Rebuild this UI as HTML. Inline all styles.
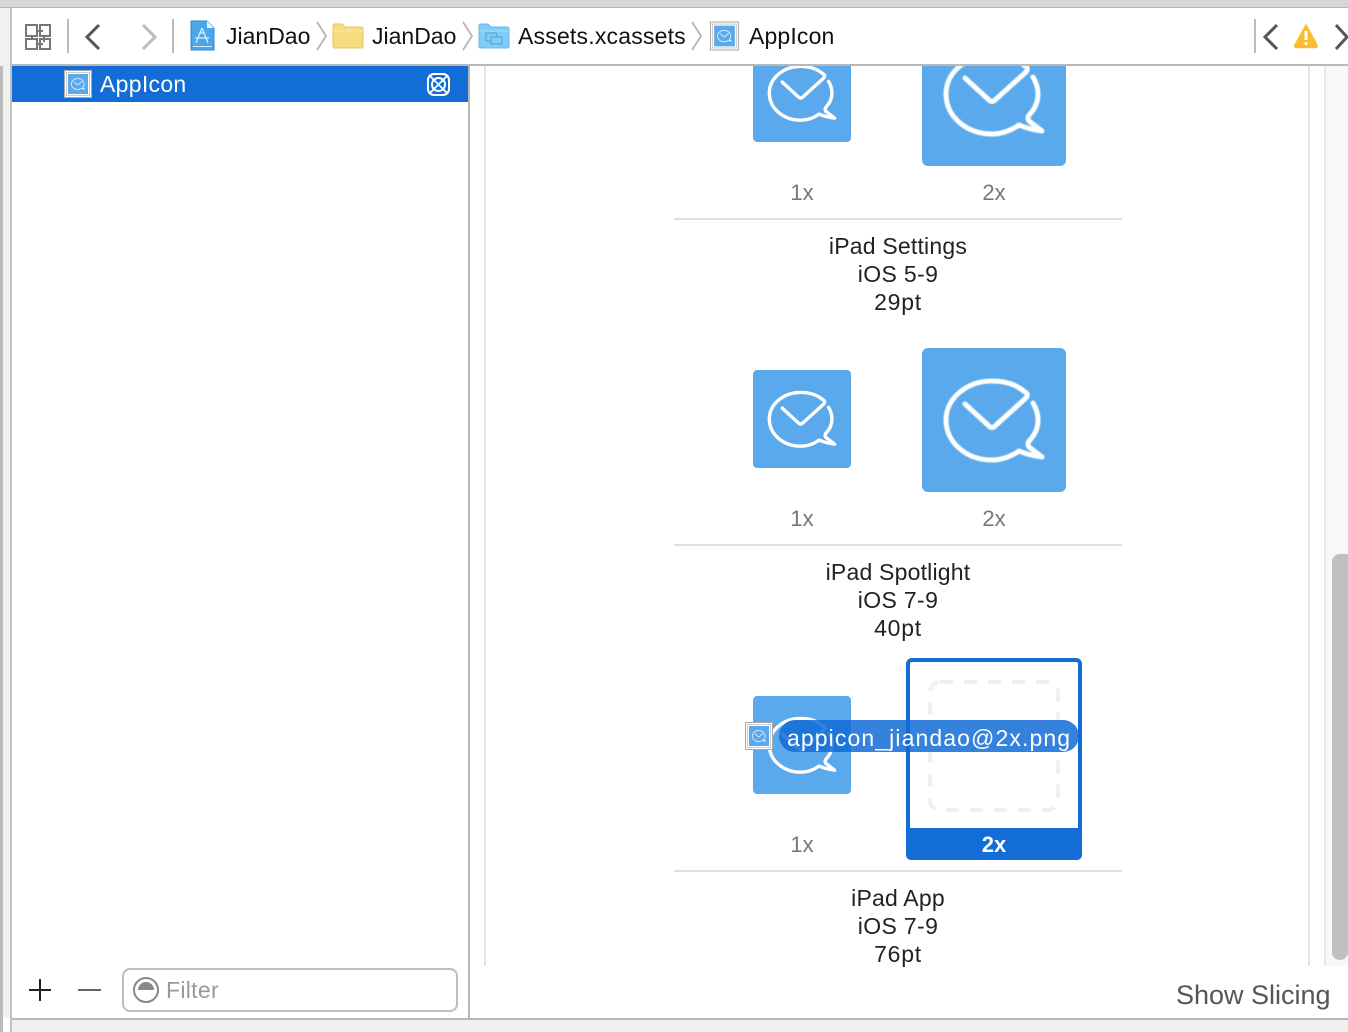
<!DOCTYPE html>
<html><head><meta charset="utf-8">
<style>
html,body{margin:0;padding:0;background:#fff}
#p{position:relative;width:1348px;height:1032px;overflow:hidden;background:#fff;font-family:"Liberation Sans",sans-serif;color:#111}
.a{position:absolute}
.t{position:absolute;font-size:23px;line-height:28px;white-space:nowrap}
.c{position:absolute;width:448px;left:674px;text-align:center;font-size:23px;line-height:28px;color:#222;letter-spacing:.2px}
.c i{font-style:normal;letter-spacing:.35px}
.c b{font-weight:normal;letter-spacing:.75px}
.s{position:absolute;font-size:22px;line-height:28px;color:#777;width:100px;text-align:center}
.d{position:absolute;left:674px;width:448px;height:2px;background:#e0e0e0}
svg{position:absolute;overflow:visible}
</style></head><body><div id="p">
<svg width="0" height="0" style="position:absolute"><defs>
<path id="bb" d="M43 56L67 78Q70 81 73 78L104 50Q107 46 103 44C95 37 84 33 70 33C45 33 24 50 24 72C24 95 45 112 70 112C80 112 90 108 97 103C104 106 112 108 120 109L107 99Q105 96 107 93C113 87 116 80 116 72C116 66 114 60 111 55" fill="none" stroke="#fff" stroke-linecap="round" stroke-linejoin="round"/>
<symbol id="ic" viewBox="0 0 144 144"><rect width="144" height="144" rx="6" fill="#5aa9ec"/><use href="#bb" stroke-width="5" style="filter:blur(.5px)"/></symbol>
<symbol id="th" viewBox="0 0 28 28"><rect x=".5" y=".5" width="27" height="27" fill="#fff" stroke="#aaa" stroke-width="1"/><rect x="2.500" y="2.500" width="23" height="23" fill="#fff" stroke="#ccc" stroke-width="1"/><rect x="4" y="4" width="20" height="20" fill="#5aa9ec"/><use href="#bb" transform="translate(4 4) scale(.139)" stroke-width="6" opacity=".8"/></symbol>
</defs></svg>

<!-- window chrome -->
<div class="a" style="left:0;top:0;width:1348px;height:7px;background:#d6d6d6"></div>
<div class="a" style="left:0;top:7px;width:1348px;height:1px;background:#b5b5b5"></div>
<div class="a" style="left:0;top:8px;width:11px;height:1010px;background:#f1f1ef"></div>
<div class="a" style="left:0;top:66px;width:3px;height:966px;background:#bbb"></div>
<div class="a" style="left:10px;top:8px;width:2px;height:1024px;background:#c2c2c2"></div>
<div class="a" style="left:12px;top:64px;width:1336px;height:2px;background:#b8b8b8"></div>
<div class="a" style="left:12px;top:1018px;width:1336px;height:2px;background:#b8b8b8"></div>
<div class="a" style="left:12px;top:1020px;width:1336px;height:12px;background:#f0f0f0"></div>

<!-- toolbar -->
<svg style="left:0;top:0" width="1348" height="64" fill="none">
<g stroke="#777" stroke-width="2"><rect x="26" y="25" width="11" height="11"/><rect x="40" y="25" width="10" height="11"/><rect x="26" y="39" width="11" height="10"/><rect x="40" y="39" width="10" height="10"/><path d="M37 31h6M37 44h6M44 36v6M32 36v3"/></g>
<path d="M68 19v34M173 19v34M1255 19v34" stroke="#bbb" stroke-width="2"/>
<path d="M99 25L87 37L99 49" stroke="#555" stroke-width="3"/>
<path d="M143 25L155 37L143 49" stroke="#bbb" stroke-width="3"/>
<path d="M317 22L326 36L317 50M463 22L472 36L463 50M692 22L701 36L692 50" stroke="#b5b5b5" stroke-width="1.800"/>
<!-- app doc -->
<path d="M191 21H207L214 28V50H191Z" fill="#4da6ea" stroke="#2f86d0"/>
<path d="M207 21L214 28H207Z" fill="#e9f4fc"/>
<path d="M193 46.500H212" stroke="#d6ecfb" stroke-width="1"/>
<path d="M202 28L196 43M202 28L208 43M195 38H209M199 33H205" stroke="#d6ecfb" stroke-width="1.300"/>
<!-- folder -->
<path d="M333 26Q333 24 335 24H342L345 27H361Q363 27 363 29V47Q363 48 361 48H335Q333 48 333 46Z" fill="#f6dc7e" stroke="#e3c663"/>
<path d="M333 31H363" stroke="#fbeaa6"/>
<!-- blue folder -->
<path d="M479 26Q479 24 481 24H488L491 27H507Q509 27 509 29V47Q509 48 507 48H481Q479 48 479 46Z" fill="#80cdf8" stroke="#6ab8e6"/>
<path d="M479 31H509" stroke="#a5ddfb"/>
<rect x="486" y="33" width="11" height="8" stroke="#4f9fd8" stroke-width="1"/><rect x="491" y="37" width="11" height="7" fill="#80cdf8" stroke="#4f9fd8" stroke-width="1"/>
<path d="M1277 25L1265 37L1277 49" stroke="#555" stroke-width="3"/>
<path d="M1336 25L1347 37L1336 49" stroke="#555" stroke-width="3"/>
<path d="M1306 25L1317 45Q1318 47.500 1315 47.500H1297Q1294 47.500 1295 45Z" fill="#fdbc2c" stroke="#fdbc2c" stroke-width="1.500" stroke-linejoin="round"/>
<path d="M1306 31V40" stroke="#fff" stroke-width="3"/><circle cx="1306" cy="43.500" r="1.500" fill="#fff"/>
</svg>
<svg style="left:710px;top:21px" width="29" height="30"><use href="#th" width="29" height="30"/></svg>
<div class="t" style="left:226px;top:22px">JianDao</div>
<div class="t" style="left:372px;top:22px">JianDao</div>
<div class="t" style="left:518px;top:22px;letter-spacing:.2px">Assets.xcassets</div>
<div class="t" style="left:749px;top:22px;letter-spacing:.15px">AppIcon</div>

<!-- sidebar -->
<div class="a" style="left:468px;top:66px;width:2px;height:952px;background:#b5b5b5"></div>
<div class="a" style="left:12px;top:66px;width:456px;height:36px;background:#126dd6"></div>
<svg style="left:64px;top:70px" width="28" height="28"><use href="#th" width="28" height="28"/></svg>
<div class="t" style="left:100px;top:70px;color:#fff;letter-spacing:.3px">AppIcon</div>
<svg style="left:427px;top:73px" width="23" height="23" fill="none" stroke="#fff" stroke-width="2"><rect x="1" y="1" width="21" height="21" rx="6"/><circle cx="11.500" cy="11.500" r="6.500"/><path d="M3 3L20 20M20 3L3 20" stroke-width="1.700"/></svg>
<svg style="left:20px;top:975px" width="100" height="30" fill="none"><path d="M20 4V26M9 15H31" stroke="#222" stroke-width="2"/><path d="M58 15H81" stroke="#666" stroke-width="2"/></svg>
<div class="a" style="left:122px;top:968px;width:332px;height:40px;border:2px solid #bdbdbd;border-radius:8px"></div>
<svg style="left:132px;top:976px" width="28" height="28" fill="none"><circle cx="14" cy="14" r="12" stroke="#888" stroke-width="2"/><path d="M6 14A8 8 0 0 1 22 14Z" fill="#888"/></svg>
<div class="t" style="left:166px;top:976px;color:#999;letter-spacing:.3px">Filter</div>

<!-- content -->
<div class="a" style="left:484px;top:66px;width:2px;height:900px;background:#e2e2e2"></div>
<div class="a" style="left:1308px;top:66px;width:2px;height:900px;background:#e2e2e2"></div>
<div class="a" style="left:1324px;top:66px;width:24px;height:900px;background:#f8f8f8;border-left:2px solid #e8e8e8;box-sizing:border-box"></div>
<div class="a" style="left:1332px;top:554px;width:16px;height:406px;background:#c0c0c0;border-radius:8px 0 8px 8px"></div>

<!-- top icons clipped -->
<div class="a" style="left:674px;top:66px;width:448px;height:110px;overflow:hidden">
<svg style="left:79px;top:-22px" width="98" height="98"><use href="#ic" width="98" height="98"/></svg>
<svg style="left:248px;top:-44px" width="144" height="144"><use href="#ic" width="144" height="144"/></svg>
</div>
<div class="s" style="left:752px;top:179px">1x</div><div class="s" style="left:944px;top:179px">2x</div>
<div class="d" style="top:218px"></div>
<div class="c" style="top:232px">iPad Settings<br><i>iOS 5-9</i><br><b>29pt</b></div>

<svg style="left:753px;top:370px" width="98" height="98"><use href="#ic" width="98" height="98"/></svg>
<svg style="left:922px;top:348px" width="144" height="144"><use href="#ic" width="144" height="144"/></svg>
<div class="s" style="left:752px;top:505px">1x</div><div class="s" style="left:944px;top:505px">2x</div>
<div class="d" style="top:544px"></div>
<div class="c" style="top:558px">iPad Spotlight<br><i>iOS 7-9</i><br><b>40pt</b></div>

<svg style="left:753px;top:696px" width="98" height="98"><use href="#ic" width="98" height="98"/></svg>
<div class="s" style="left:752px;top:831px">1x</div>
<div class="a" style="left:906px;top:658px;width:168px;height:194px;border:4px solid #126dd6;border-radius:6px"></div>
<div class="a" style="left:906px;top:828px;width:176px;height:32px;background:#126dd6;border-radius:0 0 5px 5px"></div>
<svg style="left:928px;top:680px" width="132" height="132" fill="none"><rect x="2" y="2" width="128" height="128" rx="10" stroke="#f0f0f0" stroke-width="4" stroke-dasharray="13 11"/></svg>
<div class="s" style="left:944px;top:831px;color:#fff;font-weight:bold">2x</div>
<div class="d" style="top:870px"></div>
<div class="c" style="top:884px">iPad App<br><i>iOS 7-9</i><br><b>76pt</b></div>

<!-- drag item -->
<div class="a" style="left:779px;top:720px;width:300px;height:32px;border-radius:16px;background:rgba(18,108,215,.85)"></div>
<div class="t" style="left:787px;top:724px;color:#fff;letter-spacing:1.100px">appicon_jiandao@2x.png</div>
<svg style="left:745px;top:722px" width="28" height="28"><use href="#th" width="28" height="28"/></svg>

<div class="t" style="left:1176px;top:979px;font-size:27px;line-height:32px;color:#555">Show Slicing</div>
</div></body></html>
